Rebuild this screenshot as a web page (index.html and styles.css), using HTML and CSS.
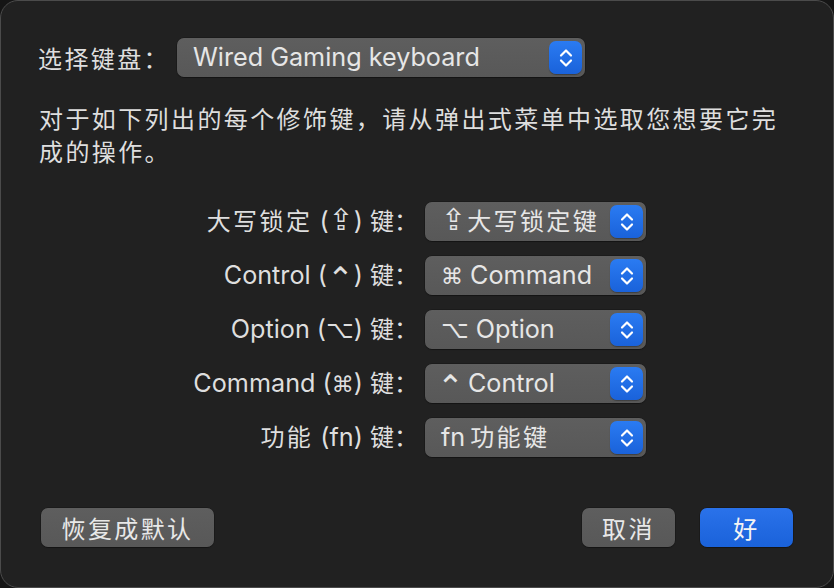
FILE: index.html
```html
<!DOCTYPE html>
<html lang="zh-CN">
<head>
<meta charset="utf-8">
<title>修饰键</title>
<link rel="stylesheet" href="styles.css">
</head>
<body>
<div class="window">
  <div class="kb-row">
    <span class="label cjk">选择键盘：</span>
    <div class="popup popup-wide">
      <span class="popup-text">Wired Gaming keyboard</span>
      <span class="stepper"><svg viewBox="0 0 32 32" width="32" height="32"><path d="M11 13.5 L16 8.5 L21 13.5 M11 18.5 L16 23.5 L21 18.5" fill="none" stroke="#fff" stroke-width="2.2" stroke-linecap="round" stroke-linejoin="round"/></svg></span>
    </div>
  </div>

  <p class="desc cjk">对于如下列出的每个修饰键，请从弹出式菜单中选取您想要它完成的操作。</p>

  <div class="mod-grid">
    <span class="mod-label"><span class="cjk">大写锁定</span> (<span class="sym caps">⇪</span>) <span class="cjk key">键：</span></span>
    <div class="popup">
      <span class="popup-text"><span class="sym caps">⇪</span><span class="cjk">大写锁定键</span></span>
      <span class="stepper"><svg viewBox="0 0 32 32" width="32" height="32"><path d="M11 13.5 L16 8.5 L21 13.5 M11 18.5 L16 23.5 L21 18.5" fill="none" stroke="#fff" stroke-width="2.2" stroke-linecap="round" stroke-linejoin="round"/></svg></span>
    </div>

    <span class="mod-label">Control (<span class="sym ctrl">⌃</span>) <span class="cjk key">键：</span></span>
    <div class="popup">
      <span class="popup-text"><span class="sym cmd">⌘</span> Command</span>
      <span class="stepper"><svg viewBox="0 0 32 32" width="32" height="32"><path d="M11 13.5 L16 8.5 L21 13.5 M11 18.5 L16 23.5 L21 18.5" fill="none" stroke="#fff" stroke-width="2.2" stroke-linecap="round" stroke-linejoin="round"/></svg></span>
    </div>

    <span class="mod-label">Option (<span class="sym opt">⌥</span>) <span class="cjk key">键：</span></span>
    <div class="popup">
      <span class="popup-text"><span class="sym opt">⌥</span> Option</span>
      <span class="stepper"><svg viewBox="0 0 32 32" width="32" height="32"><path d="M11 13.5 L16 8.5 L21 13.5 M11 18.5 L16 23.5 L21 18.5" fill="none" stroke="#fff" stroke-width="2.2" stroke-linecap="round" stroke-linejoin="round"/></svg></span>
    </div>

    <span class="mod-label">Command (<span class="sym cmd">⌘</span>) <span class="cjk key">键：</span></span>
    <div class="popup">
      <span class="popup-text"><span class="sym ctrl">⌃</span> Control</span>
      <span class="stepper"><svg viewBox="0 0 32 32" width="32" height="32"><path d="M11 13.5 L16 8.5 L21 13.5 M11 18.5 L16 23.5 L21 18.5" fill="none" stroke="#fff" stroke-width="2.2" stroke-linecap="round" stroke-linejoin="round"/></svg></span>
    </div>

    <span class="mod-label"><span class="cjk">功能</span> (fn) <span class="cjk key">键：</span></span>
    <div class="popup">
      <span class="popup-text">fn<span class="cjk fn-cjk">功能键</span></span>
      <span class="stepper"><svg viewBox="0 0 32 32" width="32" height="32"><path d="M11 13.5 L16 8.5 L21 13.5 M11 18.5 L16 23.5 L21 18.5" fill="none" stroke="#fff" stroke-width="2.2" stroke-linecap="round" stroke-linejoin="round"/></svg></span>
    </div>
  </div>

  <div class="buttons">
    <button class="btn btn-reset cjk">恢复成默认</button>
    <div class="btn-group">
      <button class="btn btn-cancel cjk">取消</button>
      <button class="btn btn-ok cjk">好</button>
    </div>
  </div>
</div>
</body>
</html>
```

FILE: styles.css
```css
html, body {
  margin: 0;
  padding: 0;
  background: #151515;
}

body {
  width: 834px;
  height: 588px;
  overflow: hidden;
  font-family: Inter, "Noto Sans CJK SC", "DejaVu Sans", sans-serif;
  color: #dedede;
  font-size: 25.2px;
}

.cjk {
  font-size: 24px;
  letter-spacing: 2.4px;
}

.window {
  box-sizing: border-box;
  width: 834px;
  height: 588px;
  border: 1px solid #4b4b4b;
  border-radius: 18px;
  background: #212121;
  padding: 37px 40px 0 37px;
  display: flex;
  flex-direction: column;
}

.kb-row {
  display: flex;
  align-items: center;
}

.label {
  width: 139px;
  white-space: nowrap;
}

.popup {
  box-sizing: border-box;
  height: 39px;
  background: linear-gradient(#5e5e5e, #585858);
  border-radius: 7px;
  box-shadow: 0 0 0 0.5px rgba(0, 0, 0, 0.35), 0 1px 1px rgba(0, 0, 0, 0.25);
  display: flex;
  align-items: center;
  justify-content: space-between;
  padding: 0 3px 0 16px;
}

.popup-wide {
  width: 408px;
}

.popup-text {
  display: block;
  white-space: pre;
  color: #e6e6e6;
  line-height: 39px;
  height: 39px;
}

.sym {
  font-family: "DejaVu Sans", sans-serif;
  line-height: 0;
}

.sym.caps {
  font-size: 30px;
}

.sym.ctrl {
  font-size: 32px;
  vertical-align: -0.2em;
}

.popup-text .sym.ctrl {
  margin: 0 -3px 0 -4px;
}

.sym.cmd {
  font-size: 22px;
}

.sym.opt {
  font-size: 24px;
}

.popup-text .sym.caps {
  margin-right: 1px;
}

.fn-cjk {
  margin-left: 5px;
}

.stepper {
  width: 33px;
  height: 33px;
  border-radius: 7px;
  background: linear-gradient(#2a7bf2, #1a62da);
  box-shadow: 0 1px 1px rgba(0, 0, 0, 0.3);
  display: flex;
  align-items: center;
  justify-content: center;
  flex: none;
}

.stepper svg {
  display: block;
}

.desc {
  margin: 26px 0 0 1px;
  width: 745px;
  line-height: 33px;
}

.mod-grid {
  margin-top: 33px;
  display: grid;
  grid-template-columns: 380px 221px;
  column-gap: 7px;
  grid-auto-rows: 39px;
  row-gap: 15px;
  align-items: center;
}

.mod-label {
  text-align: right;
  white-space: nowrap;
  line-height: 39px;
  height: 39px;
}

.mod-label .key {
  letter-spacing: 0;
}

.buttons {
  margin-top: 51px;
  margin-left: 3px;
  display: flex;
  justify-content: space-between;
  align-items: center;
}

.btn-group {
  display: flex;
  gap: 25px;
}

.btn {
  font-family: inherit;
  color: #e8e8e8;
  height: 39px;
  border: none;
  border-radius: 7px;
  background: linear-gradient(#5e5e5e, #585858);
  box-shadow: 0 0 0 0.5px rgba(0, 0, 0, 0.35), 0 1px 1px rgba(0, 0, 0, 0.25);
  padding: 0;
  display: flex;
  align-items: center;
  justify-content: center;
}

.btn-reset {
  width: 173px;
}

.btn-cancel,
.btn-ok {
  width: 93px;
}

.btn-ok {
  background: linear-gradient(#2a72ea, #1a62da);
  color: #f4f4f4;
}
```
